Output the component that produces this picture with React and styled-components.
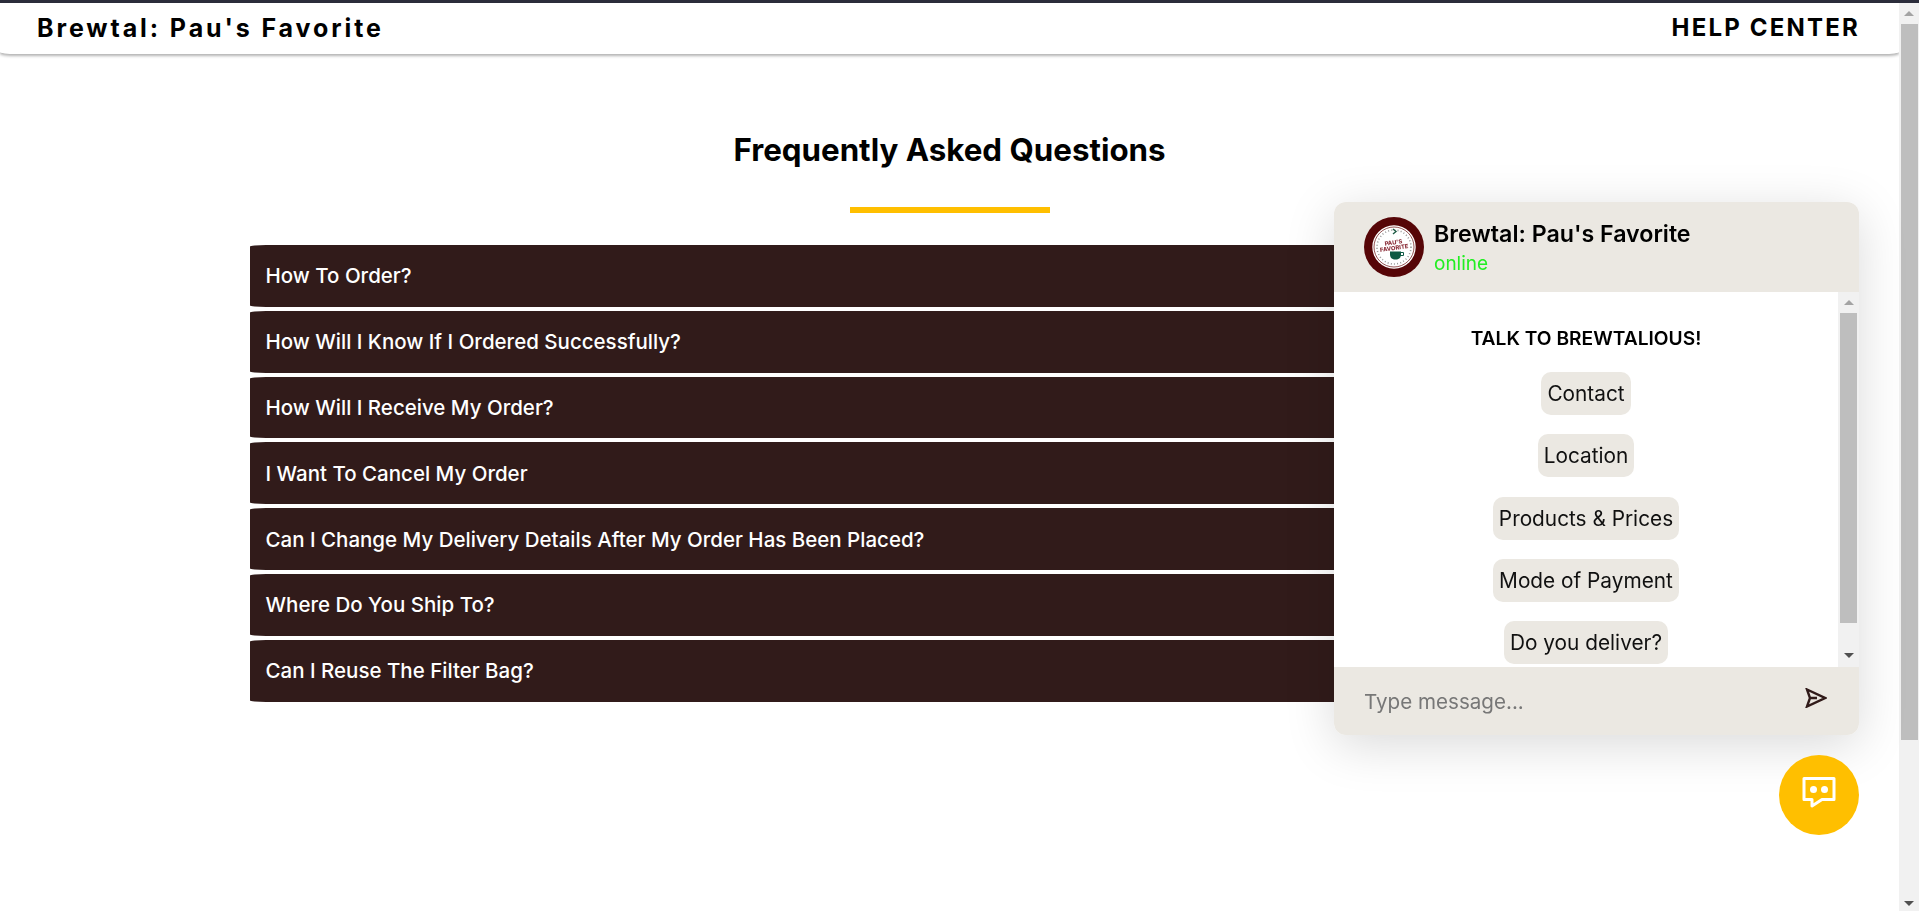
import React from 'react';
import styled, { createGlobalStyle } from 'styled-components';

const faqs = [
  'How To Order?',
  'How Will I Know If I Ordered Successfully?',
  'How Will I Receive My Order?',
  'I Want To Cancel My Order',
  'Can I Change My Delivery Details After My Order Has Been Placed?',
  'Where Do You Ship To?',
  'Can I Reuse The Filter Bag?',
];

const quickReplies = ['Contact', 'Location', 'Products & Prices', 'Mode of Payment', 'Do you deliver?'];

const GlobalStyle = createGlobalStyle`
  * { box-sizing: border-box; }
  html, body { height: 100%; overflow: hidden; }
  body {
    margin: 0;
    background: #fff;
    color: #000;
    font-family: Inter, "Noto Sans", sans-serif;
  }
`;

const Page = styled.div`
  height: 100vh;
  display: flex;
  border-top: 3px solid #2b2d3b;
`;

const Content = styled.div`
  flex: 1;
  min-width: 0;
`;

/* the browser's own scrollbars are not drawn in the screenshot, so these are built by hand */
const ScrollRail = styled.div`
  flex: none;
  width: ${(p) => p.$width}px;
  display: flex;
  flex-direction: column;
  background: #f1f1f1;
`;

const ScrollButton = styled.div`
  flex: none;
  height: ${(p) => p.$height}px;
  display: flex;
  align-items: center;
  justify-content: center;
  &::before {
    content: '';
    border-left: 5px solid transparent;
    border-right: 5px solid transparent;
    border-top: ${(p) => (p.$down ? '5px solid #505050' : 'none')};
    border-bottom: ${(p) => (p.$down ? 'none' : '5px solid #a3a3a3')};
  }
`;

const ScrollThumb = styled.div`
  flex: none;
  height: ${(p) => p.$height}px;
  margin: 0 ${(p) => p.$right}px 0 2px;
  background: #bebebe;
`;

const ScrollGap = styled.div`
  flex: 1;
`;

const Navbar = styled.nav`
  height: 51px;
  border-radius: 0 0 16px 16px / 0 0 2px 2px;
  background: #fff;
  box-shadow: 0 2px 3px rgba(0, 0, 0, 0.3);
  padding: 0 39px 2px 37px;
  display: flex;
  align-items: center;
  justify-content: space-between;
`;

const Brand = styled.div`
  font-size: 25px;
  font-weight: 700;
  letter-spacing: 2.9px;
`;

const HelpLink = styled.a`
  font-size: 24px;
  font-weight: 700;
  letter-spacing: 2.2px;
`;

const FaqSection = styled.main`
  width: 1400px;
  margin: 0 auto;
  padding-top: 75px;
`;

const FaqTitle = styled.h1`
  margin: 0;
  text-align: center;
  font-size: 31.3px;
  line-height: 42px;
  font-weight: 700;
`;

const TitleRule = styled.div`
  width: 200px;
  height: 6px;
  margin: 36px auto 32px;
  background: #ffbf00;
`;

const FaqList = styled.div`
  display: flex;
  flex-direction: column;
  gap: 4px;
`;

const FaqRow = styled.div`
  height: 61.8px;
  padding-left: 16px;
  display: flex;
  align-items: center;
  border-radius: 16px 0 0 16px / 1.500px 0 0 1.500px;
  background: #311b1a;
  color: #fff;
  font-size: 20.5px;
  font-weight: 500;
`;

const ChatPanel = styled.aside`
  position: fixed;
  left: 1334px;
  top: 202px;
  width: 525px;
  height: 533px;
  display: flex;
  flex-direction: column;
  border-radius: 12px;
  overflow: hidden;
  background: #fff;
  box-shadow: 0 10px 50px rgba(0, 0, 0, 0.15);
`;

const ChatHeader = styled.header`
  height: 90px;
  padding-left: 30px;
  display: flex;
  align-items: center;
  gap: 10px;
  background: #ebe8e2;
`;

const ChatTitle = styled.div`
  padding-top: 4px;
`;

const ChatName = styled.div`
  font-size: 23.2px;
  line-height: 30px;
  font-weight: 600;
`;

const ChatStatus = styled.div`
  font-size: 19px;
  line-height: 30px;
  color: #22ee22;
`;

const ChatBody = styled.div`
  height: 375px;
  display: flex;
`;

const Messages = styled.div`
  flex: 1;
  padding-top: 33px;
  display: flex;
  flex-direction: column;
  align-items: center;
  gap: 19.3px;
  overflow: hidden;
`;

const Greeting = styled.div`
  margin-bottom: 1.700px;
  font-size: 19.2px;
  line-height: 26px;
  font-weight: 600;
`;

const QuickReply = styled.button`
  height: 43px;
  flex: none;
  padding: 0 6px;
  border: none;
  border-radius: 10px;
  background: #ebe8e2;
  color: #111;
  font: 400 20.8px Inter, sans-serif;
`;

const ChatFooter = styled.footer`
  flex: 1;
  padding: 0 32px 0 30px;
  display: flex;
  align-items: center;
  justify-content: space-between;
  background: #ebe8e2;
`;

const MessageInput = styled.input`
  flex: 1;
  padding: 0;
  border: none;
  outline: none;
  background: transparent;
  font: 400 20.6px Inter, sans-serif;
  &::placeholder { color: #777; }
`;

const SendSvg = styled.svg`
  margin-bottom: 6px;
`;

const Fab = styled.button`
  position: fixed;
  left: 1779px;
  top: 755px;
  width: 80px;
  height: 80px;
  display: flex;
  align-items: center;
  justify-content: center;
  padding: 0;
  border: none;
  border-radius: 50%;
  background: #ffbf00;
`;

const SendIcon = () => (
  <SendSvg width="22" height="20" viewBox="0 0 22 20" fill="none" stroke="#311b1a" strokeWidth="2.400" strokeLinejoin="miter">
    <path d="M2 1.500 20 10 2 18.500 5 10Z M5 10H12" />
  </SendSvg>
);

const ChatIcon = () => (
  <svg width="36" height="36" viewBox="0 0 36 36" fill="none">
    <path d="M3 1.500h30v21H21L11 29v-6.500H3Z" stroke="#fff" strokeWidth="3" strokeLinejoin="round" />
    <circle cx="12.500" cy="12.500" r="3.500" fill="#fff" />
    <circle cx="23.500" cy="12.500" r="3.500" fill="#fff" />
  </svg>
);

const Logo = () => (
  <svg width="60" height="60" viewBox="0 0 60 60">
    <circle cx="30" cy="30" r="30" fill="#560507" />
    <circle cx="30" cy="30" r="21.700" fill="#fff" />
    <circle cx="30" cy="30" r="20" fill="none" stroke="#7a2a2a" strokeWidth="0.800" />
    <circle cx="30" cy="30" r="17" fill="none" stroke="#999" strokeWidth="1.600" strokeDasharray="1 2.200" />
    <path d="M29 12l3 2.500-3 2.500" fill="none" stroke="#1f5c45" strokeWidth="1.400" />
    <g transform="rotate(-8 30 30)" fontWeight="800" fill="#8c2f3a" fontFamily="Inter, sans-serif" textAnchor="middle">
      <text x="30" y="27.500" fontSize="5.800">PAU'S</text>
      <text x="30" y="33" fontSize="5.800">FAVORITE</text>
    </g>
    <path d="M26 34.500h11v3c0 3-2 5-5.500 5s-5.500-2-5.500-5Z" fill="#0f5a44" />
    <path d="M37 35.500h2.500v3H36" fill="none" stroke="#0f5a44" strokeWidth="1" />
  </svg>
);

const App = () => (
  <Page>
    <GlobalStyle />
    <Content>
      <Navbar>
        <Brand>Brewtal: Pau's Favorite</Brand>
        <HelpLink>HELP CENTER</HelpLink>
      </Navbar>
      <FaqSection>
        <FaqTitle>Frequently Asked Questions</FaqTitle>
        <TitleRule />
        <FaqList>
          {faqs.map((faq) => (
            <FaqRow key={faq}>{faq}</FaqRow>
          ))}
        </FaqList>
      </FaqSection>
    </Content>
    <ScrollRail $width={20}>
      <ScrollButton $height={21} />
      <ScrollThumb $height={716} $right={1} />
      <ScrollGap />
      <ScrollButton $down $height={16} />
    </ScrollRail>
    <ChatPanel>
      <ChatHeader>
        <Logo />
        <ChatTitle>
          <ChatName>Brewtal: Pau's Favorite</ChatName>
          <ChatStatus>online</ChatStatus>
        </ChatTitle>
      </ChatHeader>
      <ChatBody>
        <Messages>
          <Greeting>TALK TO BREWTALIOUS!</Greeting>
          {quickReplies.map((reply) => (
            <QuickReply key={reply}>{reply}</QuickReply>
          ))}
        </Messages>
        <ScrollRail $width={21}>
          <ScrollButton $height={21} />
          <ScrollThumb $height={310} $right={2} />
          <ScrollGap />
          <ScrollButton $down $height={24} />
        </ScrollRail>
      </ChatBody>
      <ChatFooter>
        <MessageInput placeholder="Type message..." />
        <SendIcon />
      </ChatFooter>
    </ChatPanel>
    <Fab>
      <ChatIcon />
    </Fab>
  </Page>
);

export default App;
